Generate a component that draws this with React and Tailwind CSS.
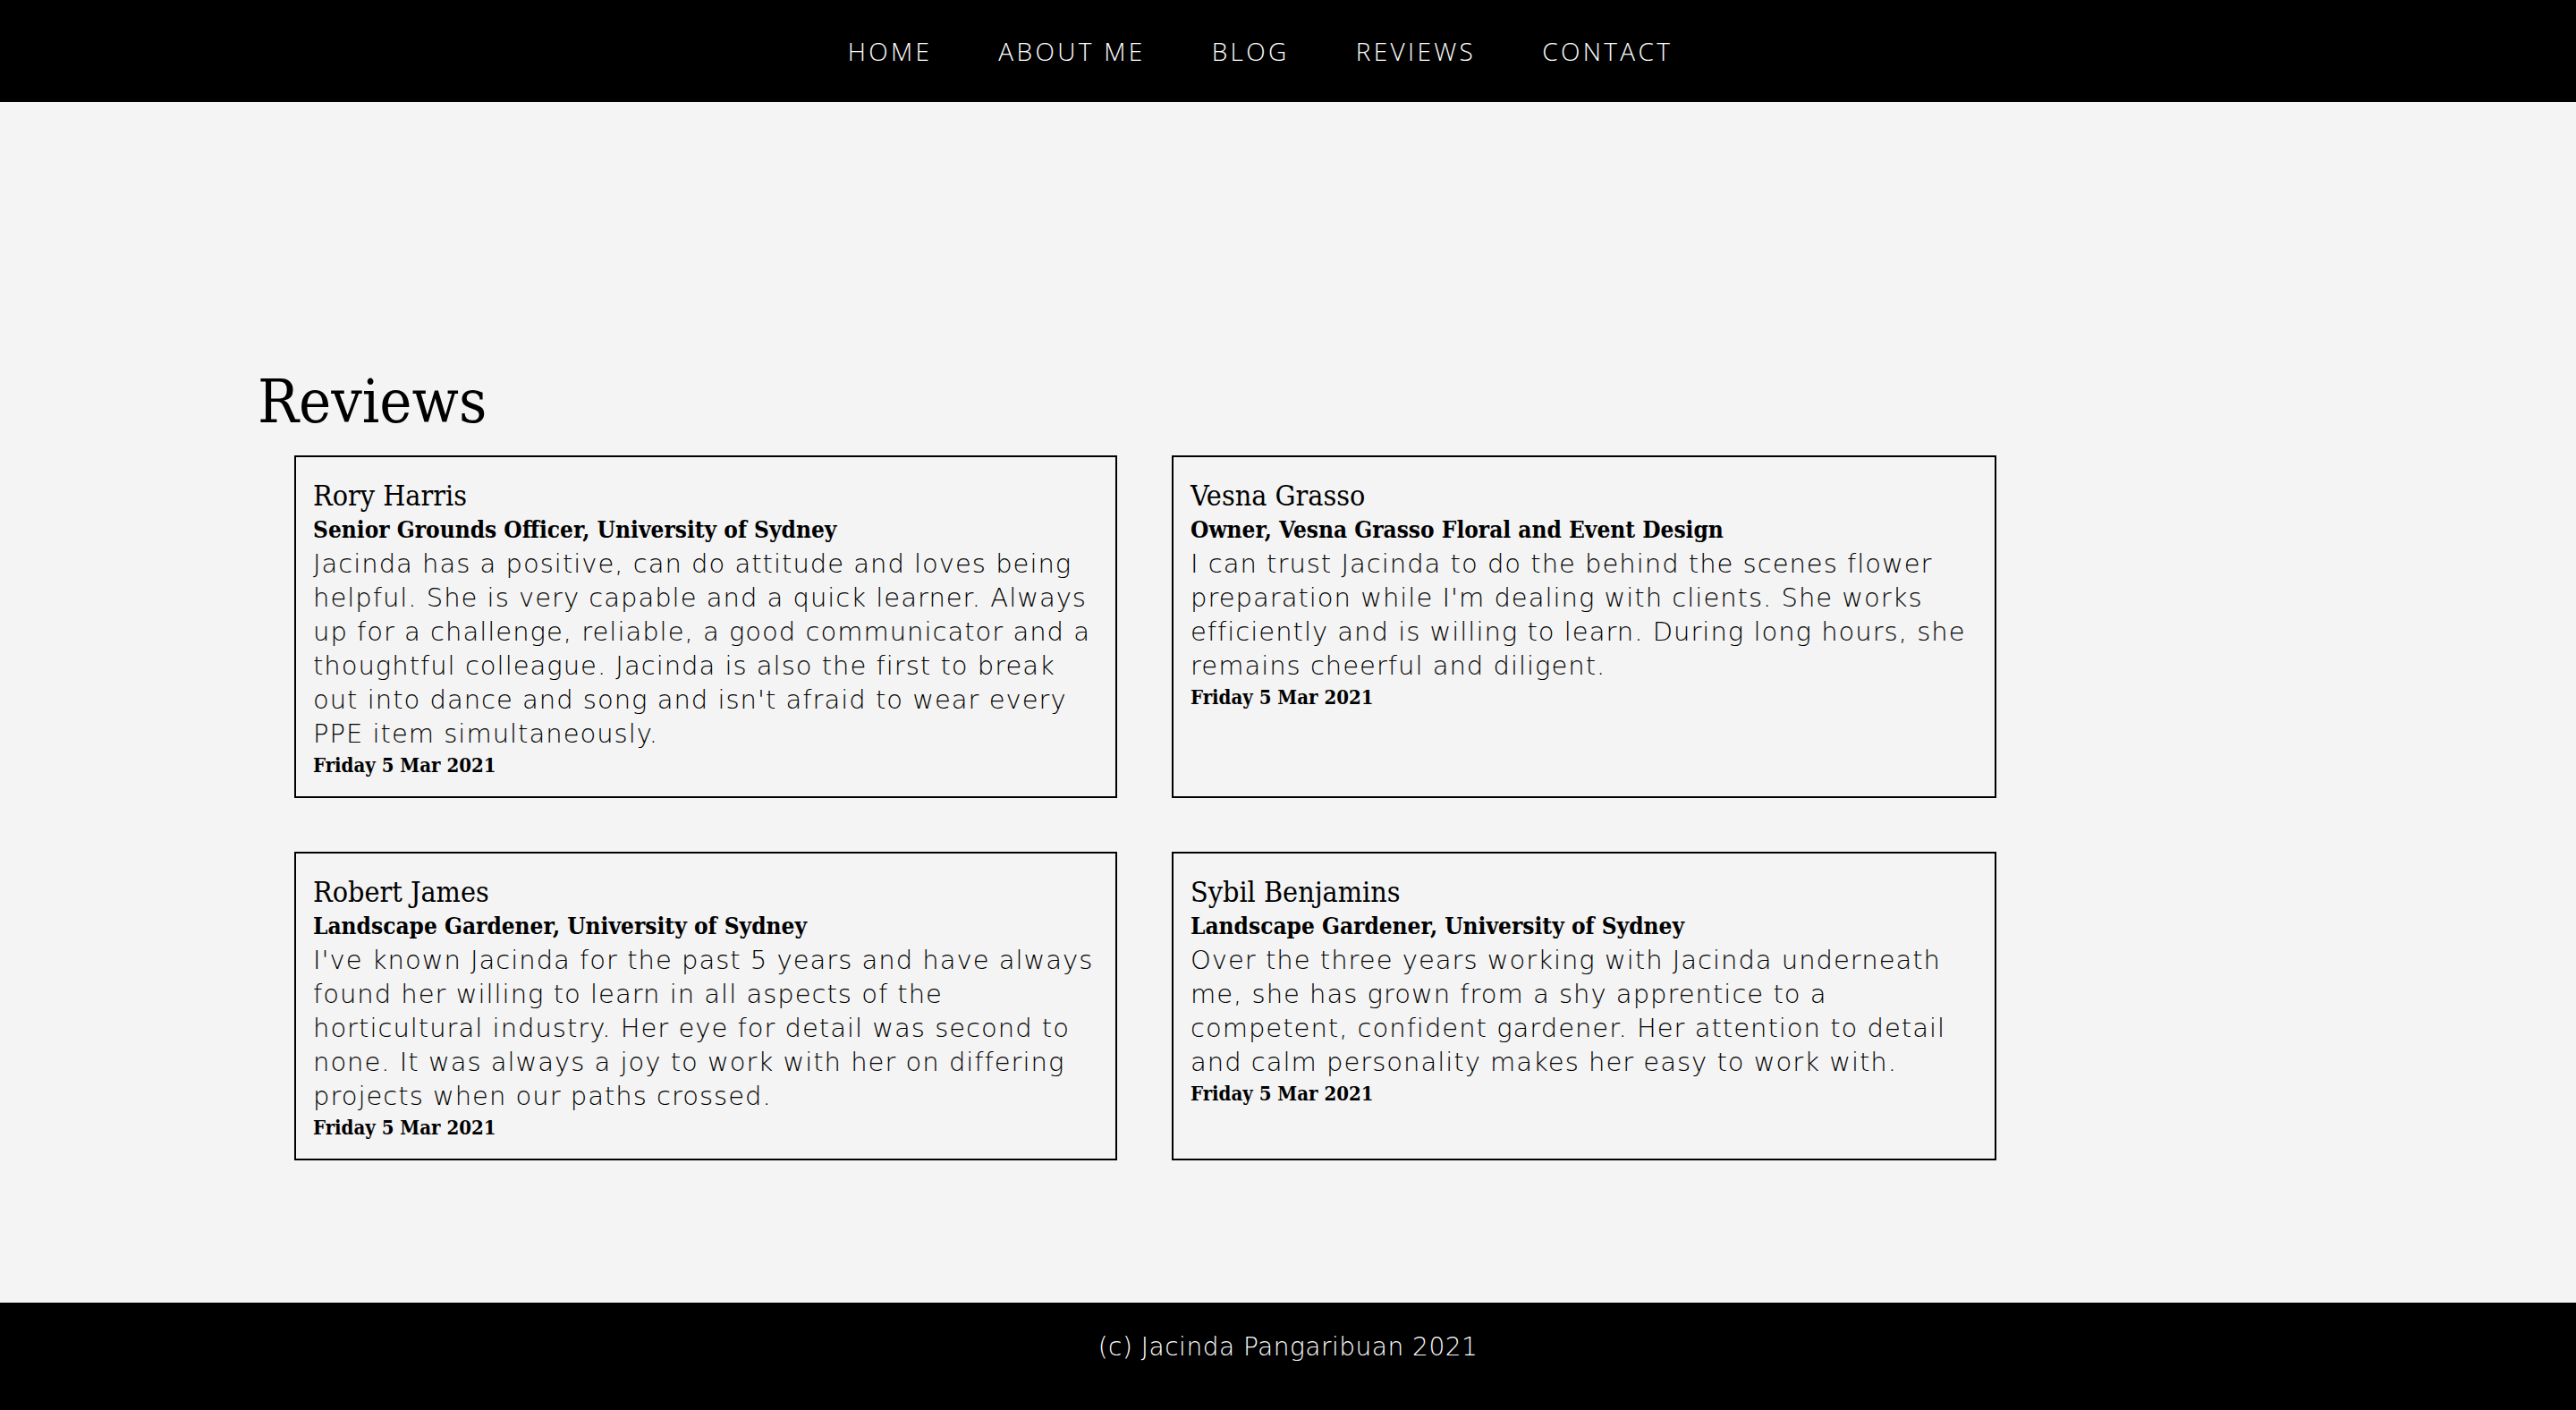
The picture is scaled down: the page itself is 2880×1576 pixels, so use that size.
const NAV = ['Home', 'About me', 'Blog', 'Reviews', 'Contact']

const REVIEWS = [
  {
    name: 'Rory Harris',
    role: 'Senior Grounds Officer, University of Sydney',
    lines: [
      'Jacinda has a positive, can do attitude and loves being',
      'helpful. She is very capable and a quick learner. Always',
      'up for a challenge, reliable, a good communicator and a',
      'thoughtful colleague. Jacinda is also the first to break',
      "out into dance and song and isn't afraid to wear every",
      'PPE item simultaneously.',
    ],
    date: 'Friday 5 Mar 2021',
  },
  {
    name: 'Vesna Grasso',
    role: 'Owner, Vesna Grasso Floral and Event Design',
    lines: [
      'I can trust Jacinda to do the behind the scenes flower',
      "preparation while I'm dealing with clients. She works",
      'efficiently and is willing to learn. During long hours, she',
      'remains cheerful and diligent.',
    ],
    date: 'Friday 5 Mar 2021',
  },
  {
    name: 'Robert James',
    role: 'Landscape Gardener, University of Sydney',
    lines: [
      "I've known Jacinda for the past 5 years and have always",
      'found her willing to learn in all aspects of the',
      'horticultural industry. Her eye for detail was second to',
      'none. It was always a joy to work with her on differing',
      'projects when our paths crossed.',
    ],
    date: 'Friday 5 Mar 2021',
  },
  {
    name: 'Sybil Benjamins',
    role: 'Landscape Gardener, University of Sydney',
    lines: [
      'Over the three years working with Jacinda underneath',
      'me, she has grown from a shy apprentice to a',
      'competent, confident gardener. Her attention to detail',
      'and calm personality makes her easy to work with.',
    ],
    date: 'Friday 5 Mar 2021',
  },
]

function ReviewCard({ review }) {
  return (
    <div className="border-2 border-black pl-[19px] pr-[12px] pt-[24px] pb-[19px]">
      <h3 className="font-['DejaVu_Serif_Condensed','DejaVu_Serif',serif] text-[32px] leading-[38px] text-black">
        {review.name}
      </h3>
      <p className="font-['DejaVu_Serif_Condensed','DejaVu_Serif',serif] font-bold text-[26px] leading-[38px] text-black">
        {review.role}
      </p>
      <p className="font-['DejaVu_Sans',sans-serif] font-extralight text-[29px] leading-[38px] tracking-[1px] text-black">
        {review.lines.map((l, i) => (
          <span key={i} className="block whitespace-nowrap">{l}</span>
        ))}
      </p>
      <p className="font-['DejaVu_Serif_Condensed','DejaVu_Serif',serif] font-bold text-[22px] leading-[32px] text-black">
        {review.date}
      </p>
    </div>
  )
}

export default function App() {
  return (
    <div className="min-h-screen flex flex-col bg-[#f4f4f4]">
      {/* Nav */}
      <nav className="h-[114px] bg-black flex items-center justify-center pr-[62px]">
        <ul className="flex gap-[74px]">
          {NAV.map((n) => (
            <li
              key={n}
              className="font-['Open_Sans',sans-serif] font-light text-[28px] uppercase tracking-[0.12em] text-white"
            >
              {n}
            </li>
          ))}
        </ul>
      </nav>

      {/* Reviews */}
      <main className="flex-1 px-[288px] pt-[303px] pb-[159px]">
        <h1 className="font-['DejaVu_Serif_Condensed','DejaVu_Serif',serif] text-[68px] leading-[63px] text-black">
          Reviews
        </h1>
        <div className="mt-[29px] ml-[41px] grid grid-cols-[920px_922px] gap-x-[61px] gap-y-[60px]">
          {REVIEWS.map((r) => (
            <ReviewCard key={r.name} review={r} />
          ))}
        </div>
      </main>

      {/* Footer */}
      <footer className="h-[120px] bg-black flex items-center justify-center pb-[20px]">
        <p className="font-['DejaVu_Sans',sans-serif] font-extralight text-[28px] tracking-[0.5px] text-white">
          (c) Jacinda Pangaribuan 2021
        </p>
      </footer>
    </div>
  )
}
